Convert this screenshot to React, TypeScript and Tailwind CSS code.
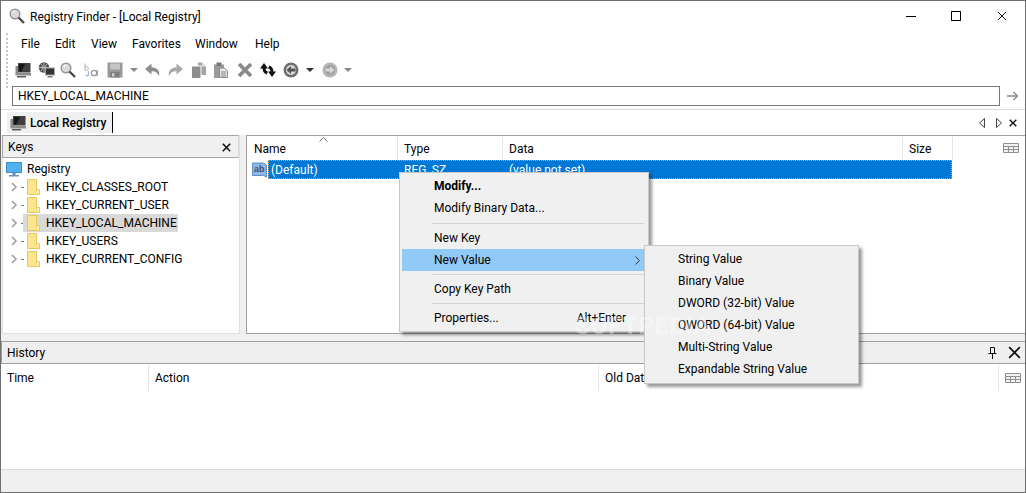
import type { ReactNode } from "react";

const FONT = "font-['Roboto','Open_Sans',sans-serif] text-[12px] leading-[16px] text-black";

function Magnifier({ className = "w-4 h-4" }: { className?: string }) {
  return (
    <svg viewBox="0 0 16 16" className={className}>
      <circle cx="6" cy="6" r="4.8" fill="#d9d9d9" stroke="#969696" strokeWidth="1.5" />
      <path d="M3.6 5a2.8 2.8 0 0 1 2.8-2" stroke="#fff" strokeWidth="1.2" fill="none" />
      <path d="M9.5 9.5 15 15" stroke="#4a4a4a" strokeWidth="2.4" />
    </svg>
  );
}

function Monitor() {
  return (
    <svg viewBox="0 0 16 16" className="w-4 h-4">
      <rect x="0.5" y="4" width="2.5" height="8" fill="#888" />
      <rect x="3" y="1" width="12.5" height="9.5" fill="#3f3f3f" />
      <path d="M4 2h6l-3.5 7.5H4z" fill="#161616" />
      <rect x="0.5" y="11" width="15.5" height="2.5" fill="#8c8c8c" />
      <rect x="2" y="14" width="9" height="1.5" fill="#5c5c5c" />
    </svg>
  );
}

function GlobeMonitor() {
  return (
    <svg viewBox="0 0 17 16" className="w-[17px] h-4">
      <circle cx="6" cy="5.5" r="5.2" fill="#4e4e4e" />
      <path d="M1 5.5h10M6 .5v10M3 2c2 2 2 5 0 7M9 2c-2 2-2 5 0 7" stroke="#d5d5d5" strokeWidth="0.8" fill="none" />
      <rect x="7.5" y="6" width="9" height="7" fill="#333" stroke="#a5a5a5" />
      <rect x="9.5" y="14" width="5" height="1.5" fill="#777" />
    </svg>
  );
}

function BaIcon() {
  return (
    <svg viewBox="0 0 16 16" className="w-4 h-4">
      <path d="M2 1.5V8M2 5a2 2 0 1 1 0 3" stroke="#a9a9a9" strokeWidth="1" fill="none" />
      <path d="M5.5 9v4.5H3M4 12.5l-1 1 1 1" stroke="#9db4cf" strokeWidth="1" fill="none" />
      <circle cx="11" cy="11" r="2.7" stroke="#9a9a9a" strokeWidth="1.3" fill="none" />
      <path d="M14.2 8v6" stroke="#9a9a9a" strokeWidth="1.3" />
    </svg>
  );
}

function Save() {
  return (
    <svg viewBox="0 0 16 16" className="w-4 h-4">
      <path d="M0.5 0.5h15v15H0.5z" fill="#999" />
      <rect x="3" y="1.5" width="10" height="6" fill="#c4c4c4" />
      <rect x="3.5" y="10" width="9" height="5.5" fill="#7e7e7e" />
      <rect x="5" y="11" width="2.5" height="3.5" fill="#c9c9c9" />
    </svg>
  );
}

function Caret({ dark }: { dark?: boolean }) {
  return (
    <svg viewBox="0 0 8 4" className="w-2 h-1">
      <path d="M0 0h8L4 4z" fill={dark ? "#333" : "#8a8a8a"} />
    </svg>
  );
}

function Undo({ flip }: { flip?: boolean }) {
  return (
    <svg viewBox="0 0 16 16" className={flip ? "w-4 h-4 -scale-x-100" : "w-4 h-4"}>
      <path d="M6.5 1.5 0 7l6.5 5.5V9.2c3.8 0 6 1 7.5 5.3 1.2-6-2-9-7.5-9.3z" fill={flip ? "#a8a8a8" : "#8c8c8c"} />
    </svg>
  );
}

function Copy() {
  return (
    <svg viewBox="0 0 16 16" className="w-4 h-4">
      <path d="M1 4.5h8.5V16H1z" fill="#8e8e8e" />
      <path d="M7 0.5h4l4 4V13h-4.5V3.5H7z" fill="#a4a4a4" />
      <path d="M11 0.5l4 4h-4z" fill="#e2e2e2" />
    </svg>
  );
}

function Paste() {
  return (
    <svg viewBox="0 0 16 16" className="w-4 h-4">
      <rect x="1" y="2.5" width="10" height="13.5" fill="#9a9a9a" />
      <rect x="3.5" y="0.5" width="5" height="3.5" fill="#777" />
      <path d="M6.5 6h5l3 3v6.5h-8z" fill="#e6e6e6" stroke="#8a8a8a" />
      <path d="M8 10h5M8 12h5M8 14h5" stroke="#888" />
    </svg>
  );
}

function BigX() {
  return (
    <svg viewBox="0 0 16 16" className="w-4 h-4">
      <path d="M2 2l12 12M14 2 2 14" stroke="#8a8a8a" strokeWidth="3.8" />
    </svg>
  );
}

function Refresh() {
  return (
    <svg viewBox="0 0 16 16" className="w-4 h-4">
      <path d="M0 6.5 4 1l4 5.5H5.6C5.6 8.5 6.6 9.3 8 9.8L6.5 12.5C4 11.5 2.6 9.5 2.6 6.5z" fill="#111" />
      <path d="M16 9.5 12 15 8 9.5h2.4c0-2-1-2.8-2.4-3.3L9.5 3.5c2.5 1 3.9 3 3.9 6z" fill="#111" />
    </svg>
  );
}

function NavBall({ forward }: { forward?: boolean }) {
  return (
    <svg viewBox="0 0 16 16" className="w-4 h-4">
      <circle cx="8" cy="8" r="7.5" fill={forward ? "#b5b5b5" : "#6f6f6f"} />
      <circle cx="8" cy="8" r="5" fill={forward ? "#a0a0a0" : "#d9d9d9"} />
      {forward ? (
        <path d="M3.5 6.5H8V4l4.5 4L8 12V9.5H3.5z" fill="#d8d8d8" />
      ) : (
        <path d="M12.5 6.5H8V4L3.5 8 8 12V9.5h4.5z" fill="#555" />
      )}
    </svg>
  );
}

function GridIcon() {
  return (
    <svg viewBox="0 0 16 10" className="w-4 h-[10px]">
      <path d="M.5.5h15v9H.5zM.5 3.5h15M.5 6.5h15M5.5 3.5v6M10.5 3.5v6" stroke="#8f8f8f" fill="#f2f2f2" />
    </svg>
  );
}

function Folder() {
  return (
    <svg viewBox="0 0 13 16" className="w-[13px] h-4 shrink-0">
      <path d="M.5.5h9v12h3v3H.5z" fill="#fce58f" stroke="#e9c75a" />
      <path d="M9.5 12V10.5h3V15" fill="#fff3c0" stroke="#e9c75a" />
    </svg>
  );
}

function Chevron() {
  return (
    <svg viewBox="0 0 7 10" className="w-[7px] h-[10px]">
      <path d="M1 1l4 4-4 4" stroke="#a0a0a0" strokeWidth="1.6" fill="none" />
    </svg>
  );
}

function CloseSmall({ className = "w-[9px] h-[9px]", width = 1.6 }: { className?: string; width?: number }) {
  return (
    <svg viewBox="0 0 9 9" className={className}>
      <path d="M.8.8l7.4 7.4M8.2.8.8 8.2" stroke="#111" strokeWidth={width} />
    </svg>
  );
}

const MENUS = [
  { label: "File", w: "w-[34px]" },
  { label: "Edit", w: "w-[36px]" },
  { label: "View", w: "w-[41px]" },
  { label: "Favorites", w: "w-[63px]" },
  { label: "Window", w: "w-[60px]" },
  { label: "Help", w: "w-[40px]" },
];

const TOOLBAR: { icon: ReactNode; ml: string }[] = [
  { icon: <Monitor />, ml: "ml-[3px]" },
  { icon: <GlobeMonitor />, ml: "ml-[7px]" },
  { icon: <Magnifier />, ml: "ml-[5px]" },
  { icon: <BaIcon />, ml: "ml-[7px]" },
  { icon: <Save />, ml: "ml-[8px]" },
  { icon: <Caret />, ml: "ml-[7px]" },
  { icon: <Undo />, ml: "ml-[7px]" },
  { icon: <Undo flip />, ml: "ml-[6px]" },
  { icon: <Copy />, ml: "ml-[8px]" },
  { icon: <Paste />, ml: "ml-[6px]" },
  { icon: <BigX />, ml: "ml-[8px]" },
  { icon: <Refresh />, ml: "ml-[7px]" },
  { icon: <NavBall />, ml: "ml-[7px]" },
  { icon: <Caret dark />, ml: "ml-[7px]" },
  { icon: <NavBall forward />, ml: "ml-[8px]" },
  { icon: <Caret />, ml: "ml-[6px]" },
];

const KEYS = ["HKEY_CLASSES_ROOT", "HKEY_CURRENT_USER", "HKEY_LOCAL_MACHINE", "HKEY_USERS", "HKEY_CURRENT_CONFIG"];

function HeaderCell({ label, className }: { label?: string; className: string }) {
  return (
    <div className={`flex items-center shrink-0 h-full border-r border-[#e5e5e5] ${className}`}>{label}</div>
  );
}

function MenuItem({ label, bold, hint, arrow, active }: { label: string; bold?: boolean; hint?: string; arrow?: boolean; active?: boolean }) {
  return (
    <div className={`flex items-center h-[22px] pl-[32px] pr-[8px] ${active ? "bg-[#91c9f7]" : ""} ${bold ? "font-bold" : ""}`}>
      <span className="flex-1">{label}</span>
      {hint && <span className="mr-[12px]">{hint}</span>}
      {arrow && (
        <svg viewBox="0 0 5 9" className="w-[5px] h-[9px] mr-[-2px]">
          <path d="M.5.5l4 4-4 4" stroke="#333" fill="none" />
        </svg>
      )}
    </div>
  );
}

function MenuSep({ h }: { h: string }) {
  return (
    <div className={`flex items-center pl-[30px] pr-[2px] ${h}`}>
      <div className="h-px w-full bg-[#d4d4d4]" />
    </div>
  );
}

export default function App() {
  return (
    <div className={`${FONT} relative w-[1026px] h-[493px] overflow-hidden flex flex-col bg-white border border-[#6f6f6f]`}>
      {/* title bar */}
      <div className="flex items-center h-[30px] shrink-0 pl-[8px]">
        <Magnifier className="w-[16px] h-[16px]" />
        <span className="ml-[5px] pt-[1px]">Registry Finder - [Local Registry]</span>
        <div className="ml-auto flex items-center">
          <div className="w-[45px] flex justify-center">
            <div className="w-[10px] h-px bg-black" />
          </div>
          <div className="w-[46px] flex justify-center">
            <div className="w-[10px] h-[10px] border border-black" />
          </div>
          <div className="w-[46px] flex justify-center">
            <CloseSmall className="w-[10px] h-[10px]" width={0.9} />
          </div>
        </div>
      </div>

      {/* menu + toolbar + address, grip runs down the left */}
      <div className="flex shrink-0 h-[79px] border-b border-[#dcdcdc]">
        <div className="ml-[5px] mt-[2px] h-[55px] border-l-2 border-dotted border-[#c4c4c4]" />
        <div className="flex-1 min-w-0 pl-[4px]">
          <div className="flex h-[24px] items-center pl-[9px] pt-[2px]">
            {MENUS.map((m) => (
              <div key={m.label} className={m.w}>{m.label}</div>
            ))}
          </div>
          <div className="flex items-center h-[30px]">
            {TOOLBAR.map((t, i) => (
              <div key={i} className={`flex items-center ${t.ml}`}>{t.icon}</div>
            ))}
          </div>
          <div className="flex items-center mt-[1px]">
            <div className="w-[988px] h-[20px] flex items-center pl-[5px] border border-[#7a7a7a]">HKEY_LOCAL_MACHINE</div>
            <svg viewBox="0 0 12 10" className="w-[12px] h-[10px] ml-[7px]">
              <path d="M0 5h10M6.5 1 10.5 5 6.5 9" stroke="#8a8a8a" strokeWidth="1.3" fill="none" />
            </svg>
          </div>
        </div>
      </div>

      {/* document tabs */}
      <div className="flex items-center shrink-0 h-[25px] pl-[6px]">
        <div className="flex items-center h-[21px] w-[106px] pl-[3px] bg-[#f0f0f0] border-r border-black font-medium">
          <Monitor />
          <span className="ml-[4px]">Local Registry</span>
        </div>
        <div className="ml-auto flex items-center">
          <svg viewBox="0 0 6 10" className="w-[6px] h-[10px]"><path d="M5.5.5v9L.5 5z" fill="none" stroke="#444" /></svg>
          <svg viewBox="0 0 6 10" className="w-[6px] h-[10px] ml-[11px]"><path d="M.5.5v9l5-4.5z" fill="none" stroke="#444" /></svg>
          <CloseSmall className="w-[8px] h-[8px] ml-[7px] mr-[8px]" />
        </div>
      </div>

      {/* keys tree and values list */}
      <div className="flex h-[199px] shrink-0 bg-[#f0f0f0] pl-[1px]">
        <div className="w-[238px] shrink-0 flex flex-col bg-white border-r border-b border-[#e0e0e0]">
          <div className="flex items-center h-[23px] shrink-0 pl-[5px] pr-[7px] pt-[1px] bg-[#f0f0f0] border border-[#a6a6a6] border-r-[#d8d8d8]">
            <span className="flex-1">Keys</span>
            <CloseSmall />
          </div>
          <div className="pt-[2px] border-l border-[#e0e0e0] flex-1">
            <div className="flex items-center h-[18px] pl-[3px]">
              <svg viewBox="0 0 16 15" className="w-4 h-[15px]">
                <rect x=".5" y=".5" width="15" height="10" fill="#53b2ee" stroke="#3a8fcf" />
                <rect x="6.5" y="11" width="3" height="2" fill="#7a8b99" />
                <rect x="3" y="13" width="10" height="1.5" fill="#5d97c4" />
              </svg>
              <span className="ml-[5px]">Registry</span>
            </div>
            {KEYS.map((k) => (
              <div key={k} className="flex items-center h-[18px] pl-[8px]">
                <Chevron />
                <div className="ml-[3px] w-[2px] border-t border-dotted border-[#777]" />
                <div className={`flex items-center h-[18px] pl-[4px] pr-px ${k === "HKEY_LOCAL_MACHINE" ? "bg-[#d9d9d9]" : ""}`}>
                  <Folder />
                  <span className="ml-[6px]">{k}</span>
                </div>
              </div>
            ))}
          </div>
        </div>

        <div className="ml-[6px] flex-1 min-w-0 flex flex-col bg-white border border-r-0 border-[#a0a0a0] relative">
          <div className="flex h-[24px] shrink-0 pt-[1px]">
            <HeaderCell label="Name" className="w-[151px] pl-[7px]" />
            <HeaderCell label="Type" className="w-[105px] pl-[6px]" />
            <HeaderCell label="Data" className="w-[400px] pl-[6px]" />
            <HeaderCell label="Size" className="w-[50px] pl-[6px]" />
            <div className="ml-auto mr-[6px] mt-[6px]"><GridIcon /></div>
          </div>
          {/* sort caret sits on top of the header */}
          <svg viewBox="0 0 9 5" className="absolute left-[72px] top-[1px] w-[9px] h-[5px]">
            <path d="M.5 4.5l4-4 4 4" stroke="#777" fill="none" />
          </svg>
          <div className="flex h-[19px] items-center">
            <div className="w-[21px] pl-[5px] shrink-0">
              <svg viewBox="0 0 16 16" className="w-4 h-4">
                <path d="M.5 1h11l3 2v12l-3-1.5H.5z" fill="#8db8e6" stroke="#5e8fc6" />
                <text x="2" y="10" fontSize="9" fontWeight="700" fill="#4b4b6b" fontFamily="Liberation Sans">ab</text>
              </svg>
            </div>
            <div className="flex items-center h-[19px] w-[684px] bg-[#0078d7] text-white border border-dotted border-[#f0a030]">
              <span className="w-[129px] pl-[2px]">(Default)</span>
              <span className="w-[105px] pl-[6px]">REG_SZ</span>
              <span className="pl-[6px]">(value not set)</span>
            </div>
          </div>
        </div>
      </div>

      <div className="h-[7px] shrink-0 bg-[#f0f0f0]" />

      {/* history */}
      <div className="flex items-center h-[23px] shrink-0 pl-[5px] pr-[4px] bg-[#efefef] border-y border-l border-[#a0a0a0]">
        <span className="flex-1">History</span>
        <svg viewBox="0 0 9 12" className="w-[9px] h-[12px]">
          <path d="M2.5.5h4v6h-4zM.5 6.5h8M4.5 7v5" stroke="#111" fill="none" />
        </svg>
        <CloseSmall className="w-[13px] h-[13px] ml-[11px]" width={1.2} />
      </div>
      <div className="flex-1 min-h-0 bg-white">
        <div className="flex h-[26px] mt-[1px]">
          <HeaderCell label="Time" className="w-[148px] pl-[6px]" />
          <HeaderCell label="Action" className="w-[450px] pl-[6px]" />
          <HeaderCell label="Old Data" className="w-[400px] pl-[6px]" />
          <div className="ml-[6px] mt-[8px]"><GridIcon /></div>
        </div>
      </div>
      <div className="h-[23px] shrink-0 bg-[#f0f0f0] border-t border-[#dcdcdc]" />

      {/* context menu */}
      <div className="absolute left-[398px] top-[171px] w-[250px] h-[160px] p-[2px] bg-[#f0f0f0] border border-[#c8c8c8] shadow-[3px_3px_3px_rgba(0,0,0,0.4)]">
        <MenuItem label="Modify..." bold />
        <MenuItem label="Modify Binary Data..." />
        <MenuSep h="h-[8px]" />
        <MenuItem label="New Key" />
        <MenuItem label="New Value" arrow active />
        <MenuSep h="h-[7px]" />
        <MenuItem label="Copy Key Path" />
        <MenuSep h="h-[7px]" />
        <MenuItem label="Properties..." hint="Alt+Enter" />
      </div>

      {/* submenu */}
      <div className="absolute left-[643px] top-[244px] w-[215px] h-[139px] pt-[2px] bg-[#f0f0f0] border border-[#c8c8c8] shadow-[3px_3px_3px_rgba(0,0,0,0.4)]">
        {["String Value", "Binary Value", "DWORD (32-bit) Value", "QWORD (64-bit) Value", "Multi-String Value", "Expandable String Value"].map((s) => (
          <div key={s} className="flex items-center h-[22px] pl-[33px]">{s}</div>
        ))}
      </div>

      {/* watermark */}
      <div className="absolute left-[574px] top-[311px] text-[24px] leading-[28px] font-bold tracking-[1px] text-white/40 pointer-events-none">SOFTPEDIA</div>
    </div>
  );
}
